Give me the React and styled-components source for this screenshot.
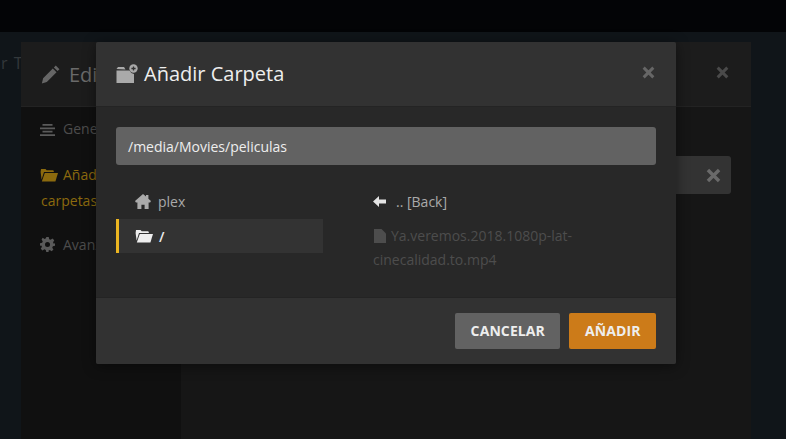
import React from 'react'
import styled, { createGlobalStyle } from 'styled-components'

const Global = createGlobalStyle`
  html, body { margin: 0; padding: 0; background: #101519; }
  * { box-sizing: border-box; }
  body { font-family: "Open Sans", "Liberation Sans", sans-serif; }
`

const Page = styled.div`
  position: relative;
  width: 786px;
  height: 439px;
  overflow: hidden;
  background: #101519;
`

const TopBar = styled.div`
  height: 32px;
  background: #030406;
`

const PageTitle = styled.div`
  padding: 21px 0 0 1px;
  font-size: 16px;
  line-height: 20px;
  letter-spacing: 1px;
  color: #33383b;
`

const Backdrop = styled.div`
  position: absolute;
  left: 21px;
  top: 42px;
  width: 730px;
  height: 397px;
  border-radius: 2px 2px 0 0;
  background: #161616;
  display: flex;
  flex-direction: column;
`

const BackHeader = styled.div`
  height: 65px;
  flex: none;
  display: flex;
  align-items: center;
  justify-content: space-between;
  padding: 0 22px 0 20px;
  background: #1c1c1c;
  border-bottom: 1px solid #232323;
`

const BackTitleWrap = styled.div`
  display: flex;
  align-items: center;
  gap: 9px;
`

const BackTitle = styled.span`
  font-size: 20px;
  color: #6a6a6a;
`

const BackBody = styled.div`
  flex: 1;
  display: flex;
`

const Sidebar = styled.div`
  width: 160px;
  flex: none;
  background: #101010;
`

const SideItem = styled.div`
  padding: 10px 20px;
  font-size: 14px;
  line-height: 24px;
  color: ${(p) => (p.$active ? '#8c6a0e' : '#4c4c4c')};
`

const SideIcon = styled.span`
  display: inline-block;
  width: 18px;
  margin: 0 5px 0 -1px;
  vertical-align: -2px;
`

const BackContent = styled.div`
  flex: 1;
  padding: 49px 20px 0 20px;
`

const BackField = styled.div`
  height: 38px;
  display: flex;
  align-items: center;
  justify-content: flex-end;
  padding-right: 10px;
  border-radius: 3px;
  background: #333;
`

const Modal = styled.div`
  position: absolute;
  left: 96px;
  top: 42px;
  width: 580px;
  height: 322px;
  border-radius: 2px;
  background: #282828;
  box-shadow: 0 2px 14px rgba(0, 0, 0, 0.45);
  display: flex;
  flex-direction: column;
`

const Header = styled.div`
  height: 65px;
  flex: none;
  display: flex;
  align-items: center;
  justify-content: space-between;
  padding: 0 21px 0 20px;
  background: #323232;
  border-bottom: 1px solid #242424;
  border-radius: 2px 2px 0 0;
`

const TitleWrap = styled.div`
  display: flex;
  align-items: center;
  gap: 6px;
`

const Title = styled.h2`
  margin: 0;
  font-size: 20px;
  line-height: 28px;
  font-weight: 400;
  color: #eee;
`

const Body = styled.div`
  flex: 1;
  padding: 20px 20px 0;
`

const PathInput = styled.div`
  height: 38px;
  display: flex;
  align-items: center;
  padding: 0 12px;
  border-radius: 3px;
  background: #626262;
  font-size: 14px;
  color: #eee;
`

const Columns = styled.div`
  display: flex;
  margin-top: 20px;
`

const LeftCol = styled.div`
  width: 207px;
  flex: none;
`

const RightCol = styled.div`
  flex: 1;
  margin-left: 50px;
`

const Crumb = styled.div`
  height: 34px;
  display: flex;
  align-items: center;
  gap: ${(p) => (p.$active ? 6 : 7)}px;
  padding: 0 0 ${(p) => (p.$active ? 0 : 2)}px 16px;
  font-size: 14px;
  font-weight: ${(p) => (p.$active ? 600 : 400)};
  color: ${(p) => (p.$active ? '#eee' : '#aaa')};
  background: ${(p) => (p.$active ? '#333' : 'transparent')};
  border-left: 3px solid ${(p) => (p.$active ? '#ebb521' : 'transparent')};
`

const BackRow = styled.div`
  height: 34px;
  display: flex;
  align-items: center;
  gap: 10px;
  padding-bottom: 2px;
  font-size: 14px;
  color: #aaa;
`

const FileRow = styled.div`
  margin-top: 5px;
  width: 240px;
  font-size: 14px;
  line-height: 24px;
  color: #4d4d4d;
`

const FileIcon = styled.svg`
  display: inline-block;
  width: 12px;
  height: 14px;
  margin: 0 5px 0 1px;
  vertical-align: -2px;
`

const Footer = styled.div`
  height: 67px;
  flex: none;
  display: flex;
  justify-content: flex-end;
  align-items: center;
  gap: 9px;
  padding: 0 20px;
  background: #323232;
  border-top: 1px solid #242424;
  border-radius: 0 0 2px 2px;
`

const Button = styled.button`
  height: 36px;
  padding: 0 15.5px 2px;
  border: 0;
  border-radius: 2px;
  font-family: inherit;
  font-size: 14px;
  font-weight: 700;
  letter-spacing: 0.1px;
  color: #eee;
  background: ${(p) => (p.$primary ? '#cc7b19' : '#626262')};
`

const CloseIcon = styled.svg`
  display: block;
  flex: none;
  margin-bottom: ${(p) => p.$lift || 0}px;
`

const Close = ({ color, size = 13, lift }) => (
  <CloseIcon width={size} height={size} viewBox="0 0 14 14" $lift={lift}>
    <path d="M1.8 1.8l10.4 10.4M12.2 1.8L1.8 12.2" stroke={color} strokeWidth="3.2" fill="none" />
  </CloseIcon>
)

const Pencil = ({ color }) => (
  <svg width="19" height="19" viewBox="0 0 18 18">
    <path fill={color} d="M14 0.5l3.5 3.5-1.8 1.8L12.2 2.3zM11.2 3.3l3.5 3.5-9.2 9.2-4.7 1.5 1.2-5z" />
  </svg>
)

const FolderOpen = ({ color }) => (
  <svg width="18" height="14" viewBox="0 0 18 14" style={{ flex: 'none' }}>
    <path fill={color} d="M1 1h4.5l1.2 1.3h6.6l.7 1.7H4L1.6 11.5 0.6 4z" />
    <path fill={color} d="M4.8 5H18l-2.6 8.5H1.8z" />
  </svg>
)

const FolderPlus = () => (
  <svg width="22" height="20" viewBox="0 0 22 20" style={{ flex: 'none' }}>
    <path fill="#aaa" d="M0.5 5L2 3h6l1.5 2.5z" />
    <path fill="#aaa" d="M0.5 6.5H13.5a5.5 5.5 0 004.5 3.4V19H0.5z" />
    <circle cx="17.5" cy="4.5" r="4.2" fill="#aaa" />
    <path d="M15.4 4.5h4.2M17.5 2.4v4.2" stroke="#323232" strokeWidth="1.3" />
  </svg>
)

const Home = () => (
  <svg width="16" height="15" viewBox="0 0 16 15" style={{ flex: 'none' }}>
    <path fill="#aaa" d="M8 0l3 2.6V1h2.4v3.7L16 7l-.9 1.4H13.6V15H9.6v-4.2H6.4V15H2.4V8.4H.9L0 7z" />
  </svg>
)

const ArrowLeft = () => (
  <svg width="13" height="11" viewBox="0 0 13 11">
    <path fill="#e4e4e4" d="M0 5.5L6 0v3.5h7v4H6V11z" />
  </svg>
)

const Gear = ({ color }) => (
  <svg width="15" height="15" viewBox="0 0 24 24">
    <path fill={color} fillRule="evenodd" d="M10 0h4l.7 3.4 2.3 1 3-1.9 2.8 2.8-1.9 3 1 2.3L24 10v4l-3.4.7-1 2.3 1.9 3-2.8 2.8-3-1.9-2.3 1L14 24h-4l-.7-3.4-2.3-1-3 1.9-2.8-2.8 1.9-3-1-2.3L0 14v-4l3.4-.7 1-2.3-1.9-3L4.3 1.2l3 1.9 2.3-1zM12 8a4 4 0 100 8 4 4 0 000-8z" />
  </svg>
)

const Lines = ({ color }) => (
  <svg width="15" height="12" viewBox="0 0 15 12">
    <path fill={color} d="M2.5 0h10v1.8h-10zM0 3.4h15v1.8H0zM2.5 6.8h10v1.8h-10zM0 10.2h15V12H0z" />
  </svg>
)

export default function App() {
  return (
    <Page>
      <Global />
      <TopBar />
      <PageTitle>r T</PageTitle>
      <Backdrop>
        <BackHeader>
          <BackTitleWrap>
            <Pencil color="#666" />
            <BackTitle>Editar</BackTitle>
          </BackTitleWrap>
          <Close color="#4a4a4a" lift={4} />
        </BackHeader>
        <BackBody>
          <Sidebar>
            <SideItem><SideIcon><Lines color="#5a5a5a" /></SideIcon>General</SideItem>
            <SideItem $active><SideIcon><FolderOpen color="#8c6a0e" /></SideIcon>Añadir<br />carpetas</SideItem>
            <SideItem><SideIcon><Gear color="#5a5a5a" /></SideIcon>Avanzado</SideItem>
          </Sidebar>
          <BackContent>
            <BackField><Close color="#6a6a6a" size={15} /></BackField>
          </BackContent>
        </BackBody>
      </Backdrop>
      <Modal>
        <Header>
          <TitleWrap>
            <FolderPlus />
            <Title>Añadir Carpeta</Title>
          </TitleWrap>
          <Close color="#666" lift={4} />
        </Header>
        <Body>
          <PathInput>/media/Movies/peliculas</PathInput>
          <Columns>
            <LeftCol>
              <Crumb><Home />plex</Crumb>
              <Crumb $active><FolderOpen color="#eee" />/</Crumb>
            </LeftCol>
            <RightCol>
              <BackRow><ArrowLeft />.. [Back]</BackRow>
              <FileRow>
                <FileIcon viewBox="0 0 12 14">
                  <path fill="#4d4d4d" d="M0 0h7.5L12 4.5V14H0z" />
                </FileIcon>
                Ya.veremos.2018.1080p-lat-cinecalidad.to.mp4
              </FileRow>
            </RightCol>
          </Columns>
        </Body>
        <Footer>
          <Button>CANCELAR</Button>
          <Button $primary>AÑADIR</Button>
        </Footer>
      </Modal>
    </Page>
  )
}
